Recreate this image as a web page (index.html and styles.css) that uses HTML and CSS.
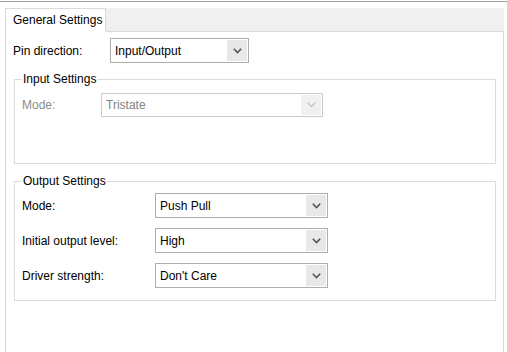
FILE: index.html
```html
<!DOCTYPE html>
<html>
<head>
<meta charset="utf-8">
<link rel="stylesheet" href="styles.css">
</head>
<body>
<div class="topline"></div>
<div class="tabstrip">
  <div class="tab">General Settings</div>
</div>
<div class="panel">
  <div class="row pin-row">
    <span class="label">Pin direction:</span>
    <div class="select pin-select">
      <span class="value">Input/Output</span>
      <span class="arrow"><svg width="9" height="6" viewBox="0 0 9 6"><polyline points="0.8,0.8 4.5,4.5 8.2,0.8" fill="none" stroke="#555" stroke-width="1.6"/></svg></span>
    </div>
  </div>

  <fieldset class="group input-group">
    <legend>Input Settings</legend>
    <div class="row">
      <span class="label disabled-label in-label">Mode:</span>
      <div class="select disabled in-select">
        <span class="value">Tristate</span>
        <span class="arrow"><svg width="9" height="6" viewBox="0 0 9 6"><polyline points="0.8,0.8 4.5,4.5 8.2,0.8" fill="none" stroke="#c4c4c4" stroke-width="1.4"/></svg></span>
      </div>
    </div>
  </fieldset>

  <fieldset class="group output-group">
    <legend>Output Settings</legend>
    <div class="rows">
      <div class="row">
        <span class="label out-label">Mode:</span>
        <div class="select out-select">
          <span class="value">Push Pull</span>
          <span class="arrow"><svg width="9" height="6" viewBox="0 0 9 6"><polyline points="0.8,0.8 4.5,4.5 8.2,0.8" fill="none" stroke="#555" stroke-width="1.6"/></svg></span>
        </div>
      </div>
      <div class="row">
        <span class="label out-label">Initial output level:</span>
        <div class="select out-select">
          <span class="value">High</span>
          <span class="arrow"><svg width="9" height="6" viewBox="0 0 9 6"><polyline points="0.8,0.8 4.5,4.5 8.2,0.8" fill="none" stroke="#555" stroke-width="1.6"/></svg></span>
        </div>
      </div>
      <div class="row">
        <span class="label out-label">Driver strength:</span>
        <div class="select out-select">
          <span class="value">Don't Care</span>
          <span class="arrow"><svg width="9" height="6" viewBox="0 0 9 6"><polyline points="0.8,0.8 4.5,4.5 8.2,0.8" fill="none" stroke="#555" stroke-width="1.6"/></svg></span>
        </div>
      </div>
    </div>
  </fieldset>
</div>
</body>
</html>
```

FILE: styles.css
```css
* { box-sizing: border-box; }
html, body { margin: 0; padding: 0; background: #fff; height: 100%; overflow: hidden; }
body {
  font-family: "Liberation Sans", Arial, sans-serif;
  font-size: 12px;
  color: #000;
}
.topline {
  margin-top: 1px;
  height: 1px;
  background: #a0a0a0;
}
.tabstrip {
  margin-top: 6px;
  margin-left: 5px;
  width: 499px;
  height: 23px;
  background: #f0f0f0;
  display: flex;
}
.tab {
  width: 101px;
  height: 23px;
  background: #fff;
  border: 1px solid #d9d9d9;
  border-bottom: none;
  padding-left: 7px;
  display: flex;
  align-items: center;
  line-height: 14px;
}
.panel {
  margin-left: 5px;
  width: 499px;
  height: 330px;
  border: 1px solid #d9d9d9;
  border-top: none;
  display: flex;
  flex-direction: column;
}
.panel::before {
  content: "";
  display: block;
  margin-left: 100px;
  height: 1px;
  background: #d9d9d9;
}
.row {
  display: flex;
  align-items: center;
}
.label { line-height: 14px; white-space: nowrap; }
.pin-row {
  margin-top: 6px;
  padding-left: 7px;
}
.pin-row .label { width: 97px; }
.select {
  display: flex;
  align-items: stretch;
  border: 1px solid #adadad;
  background: #fff;
  height: 25px;
  padding-left: 4px;
}
.select .value {
  flex: 1;
  display: flex;
  align-items: center;
  line-height: 14px;
}
.select .arrow {
  width: 20px;
  margin: 1px;
  background: #e8e8e8;
  display: flex;
  align-items: center;
  justify-content: center;
}
.pin-select { width: 139px; }
.group {
  margin: 0;
  border: 1px solid #dcdcdc;
  padding: 0 0 0 7px;
  min-width: 0;
}
.group legend {
  padding: 0 1px;
  margin-left: 0;
  line-height: 14px;
}
.input-group {
  margin: 9px 7px 0 8px;
  padding-bottom: 46px;
}
.input-group .row { margin-top: 7px; }
.in-label { width: 79px; }
.disabled-label { color: #8d8d8d; }
.select.disabled {
  border-color: #cccccc;
  height: 24px;
}
.select.disabled .value { color: #838383; }
.select.disabled .arrow { background: #f0f0f0; }
.in-select { width: 222px; }
.output-group {
  margin: 10px 7px 0 8px;
  padding-bottom: 12px;
}
.rows {
  margin-top: 5px;
  display: flex;
  flex-direction: column;
  gap: 10px;
}
.out-label { width: 133px; }
.out-select { width: 173px; }
```
